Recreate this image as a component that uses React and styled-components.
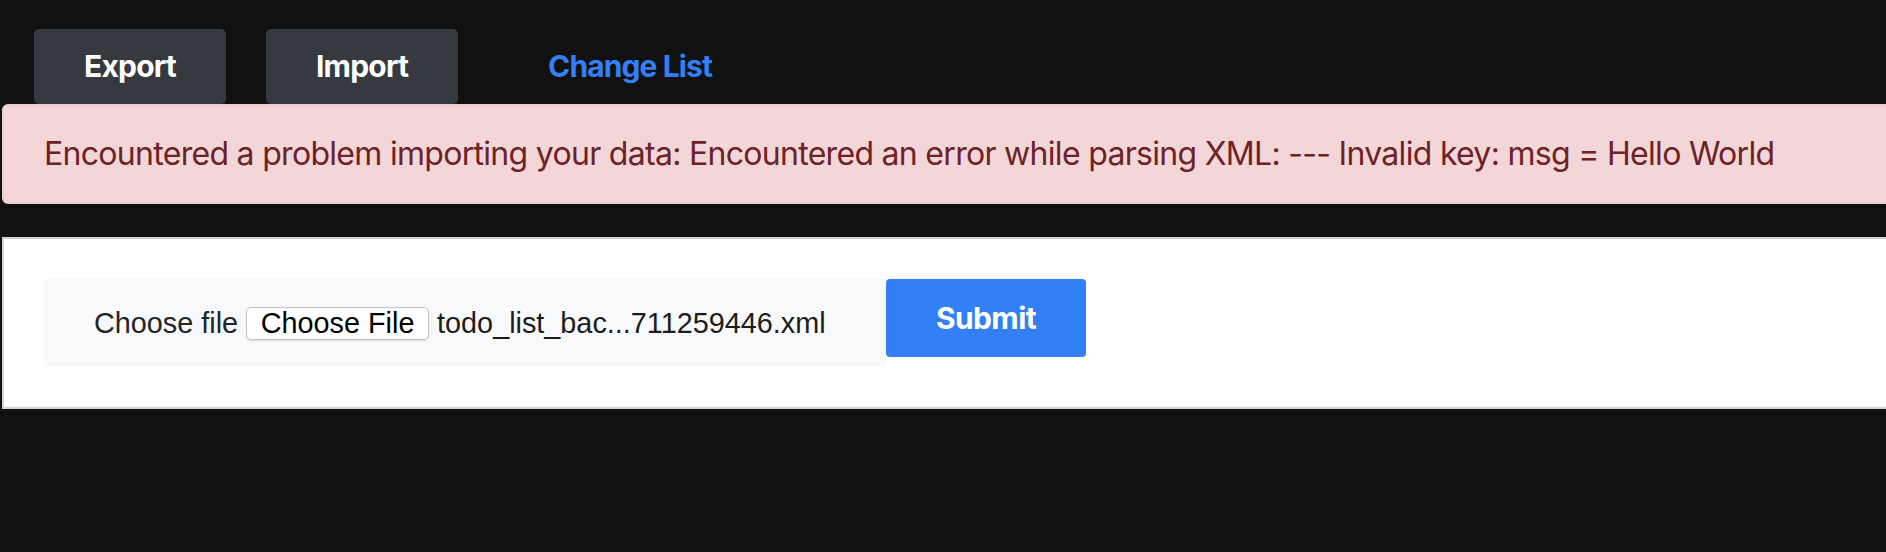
import React from 'react';
import styled, { createGlobalStyle } from 'styled-components';

const GlobalStyle = createGlobalStyle`
  html, body {
    margin: 0;
    padding: 0;
    background: #111111;
    overflow: hidden;
  }
  body {
    font-family: Inter, "Liberation Sans", sans-serif;
  }
`;

const Page = styled.div`
  width: 1960px;
  height: 552px;
  padding-left: 2px;
  box-sizing: border-box;
`;

const Toolbar = styled.nav`
  display: flex;
  align-items: center;
  gap: 40px;
  padding: 28px 0 0 32px;
  height: 76px;
`;

const NavButton = styled.button`
  height: 75px;
  min-width: ${p => (p.link ? 'auto' : '192px')};
  padding: 0 50px;
  border: none;
  border-radius: 5px;
  background: ${p => (p.link ? 'transparent' : '#343a40')};
  color: ${p => (p.link ? '#337ff5' : '#ffffff')};
  font-family: Inter, "Liberation Sans", sans-serif;
  font-weight: 700;
  font-size: 30px;
  letter-spacing: ${p => (p.link ? '-0.9px' : '-0.8px')};
  cursor: pointer;
`;

const Alert = styled.div`
  background: #f3d6d8;
  color: #6e2227;
  border: 2px solid #f0cdd0;
  border-radius: 6px;
  padding: 24px 40px;
  font-size: 32px;
  line-height: 48px;
  letter-spacing: -0.7px;
`;

const Panel = styled.section`
  margin-top: 33px;
  background: #ffffff;
  border: 2px solid #d3d3d8;
  padding: 40px;
  display: flex;
  align-items: flex-start;
`;

const FileBox = styled.div`
  width: 842px;
  height: 88px;
  box-sizing: border-box;
  padding-left: 50px;
  background: #f8f9fa;
  border-radius: 3px 0 0 3px;
  display: flex;
  align-items: center;
  gap: 8px;
  font-family: "Liberation Sans", Arial, sans-serif;
  font-size: 28.8px;
  color: #212529;
`;

const FileButton = styled.span`
  display: inline-flex;
  align-items: center;
  justify-content: center;
  height: 33px;
  width: 183px;
  box-sizing: border-box;
  background: #ffffff;
  border: 1px solid #c4c4c4;
  border-radius: 5px;
  box-shadow: 0 1px 1px rgba(0, 0, 0, 0.12);
  color: #000000;
  font-size: 28.8px;
`;

const FileName = styled.span`
  color: #1c1c1c;
`;

const SubmitButton = styled.button`
  width: 200px;
  height: 78px;
  border: none;
  border-radius: 4px;
  background: #337ff5;
  color: #ffffff;
  font-family: Inter, "Liberation Sans", sans-serif;
  font-weight: 700;
  font-size: 30px;
  letter-spacing: -0.6px;
  cursor: pointer;
`;

export default function App() {
  return (
    <>
      <GlobalStyle />
      <Page>
        <Toolbar>
          <NavButton>Export</NavButton>
          <NavButton>Import</NavButton>
          <NavButton link>Change List</NavButton>
        </Toolbar>
        <Alert>
          Encountered a problem importing your data: Encountered an error while parsing XML: --- Invalid key: msg = Hello World
        </Alert>
        <Panel>
          <FileBox>
            <span>Choose file</span>
            <FileButton>Choose File</FileButton>
            <FileName>todo_list_bac...711259446.xml</FileName>
          </FileBox>
          <SubmitButton>Submit</SubmitButton>
        </Panel>
      </Page>
    </>
  );
}
